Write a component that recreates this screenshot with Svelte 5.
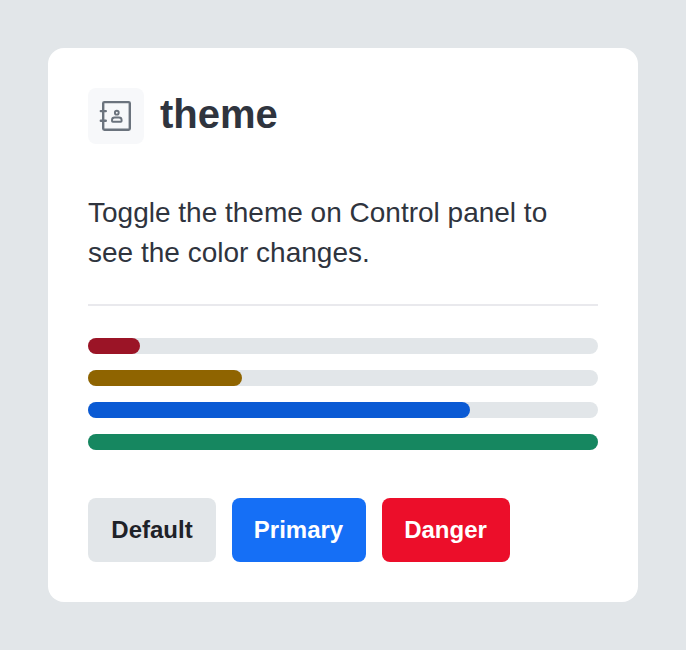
<script>
  const bars = [
    { value: 10.2, tone: 'danger' },
    { value: 30.2, tone: 'warning' },
    { value: 74.9, tone: 'info' },
    { value: 100, tone: 'success' }
  ];
</script>

<main>
  <section class="card">
    <header>
      <span class="icon">
        <svg width="34" height="34" viewBox="0 0 34 34" fill="none" stroke="currentColor" aria-hidden="true">
          <rect x="4.2" y="3.1" width="26.6" height="27.7" rx="1.2" stroke-width="2.4" />
          <path d="M1.8 12.1H6.8M1.8 21.8H6.8" stroke-width="2.4" stroke-linecap="round" />
          <circle cx="17.8" cy="13.7" r="1.9" stroke-width="1.9" />
          <path d="M13 22V21Q13 18.5 15.6 18.5H20Q22.6 18.5 22.6 21V22Q22.6 22.8 21.8 22.8H13.8Q13 22.8 13 22Z" stroke-width="1.9" />
        </svg>
      </span>
      <h1>theme</h1>
    </header>
    <p>Toggle the theme on Control panel to see the color changes.</p>
    <hr />
    <div class="bars">
      {#each bars as bar}
        <div class="track"><div class="fill {bar.tone}" style="width: {bar.value}%"></div></div>
      {/each}
    </div>
    <div class="actions">
      <button class="default">Default</button>
      <button class="primary">Primary</button>
      <button class="destructive">Danger</button>
    </div>
  </section>
</main>

<style>
  :global(body) { margin: 0; background: #e2e6e9; }
  main {
    box-sizing: border-box;
    min-height: 650px;
    padding: 48px;
    font-family: "Liberation Sans", Arial, sans-serif;
    color: #2f343e;
  }
  .card {
    box-sizing: border-box;
    height: 554px;
    padding: 40px;
    background: #fff;
    border-radius: 16px;
  }
  header { display: flex; align-items: center; gap: 16px; height: 56px; }
  .icon {
    display: flex;
    align-items: center;
    justify-content: center;
    width: 56px;
    height: 56px;
    border-radius: 8px;
    background: #f7f8fa;
    color: #6b737d;
  }
  h1 { margin: 0; padding-bottom: 4px; font-size: 40px; line-height: 52px; font-weight: 700; }
  p { margin: 49px 0 31px; font-size: 28px; line-height: 40px; }
  hr { height: 2px; margin: 0 0 32px; border: 0; background: #e9e9ed; }
  .bars { display: flex; flex-direction: column; gap: 16px; }
  .track { height: 16px; border-radius: 8px; background: #e2e6e9; }
  .fill { height: 100%; border-radius: 8px; }
  .danger { background: #9b1426; }
  .warning { background: #8f6400; }
  .info { background: #0a5ad4; }
  .success { background: #168760; }
  .actions { display: flex; gap: 16px; margin-top: 48px; }
  button {
    box-sizing: border-box;
    height: 64px;
    width: 128px;
    padding: 0;
    border: 0;
    border-radius: 8px;
    font: 700 24px/32px "Liberation Sans", Arial, sans-serif;
    color: #fff;
  }
  .default { background: #e2e6e9; color: #1e2228; }
  .primary { width: 134px; padding-right: 1px; background: #156ff6; }
  .destructive { padding-right: 1px; background: #ec0e2a; }
</style>
